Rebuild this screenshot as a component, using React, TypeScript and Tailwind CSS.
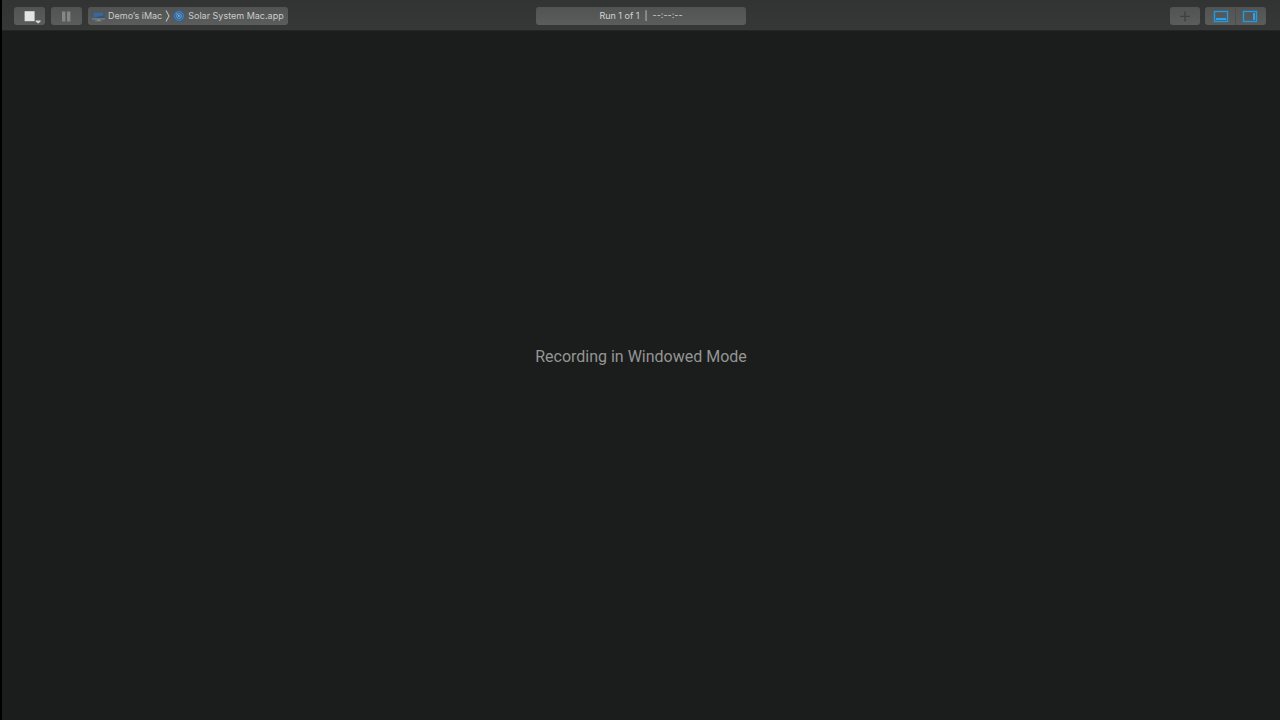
import React from 'react';

const buttonFace = 'bg-linear-to-b from-[#525453] to-[#5b5d5c]';

function StopIcon() {
  return (
    <svg width="31" height="18" viewBox="0 0 31 18" aria-hidden="true">
      <rect x="10.6" y="4.2" width="10" height="10" fill="#e2e3e2" />
      <path d="M21.6 13.4h5v1L24.1 16.6 21.6 14.4z" fill="#d4d5d4" />
    </svg>
  );
}

function PauseIcon() {
  return (
    <svg width="31" height="18" viewBox="0 0 31 18" aria-hidden="true">
      <path d="M11 4.4h3.4v10H11zM16 4.4h3.4v10H16z" fill="#858786" />
    </svg>
  );
}

function ComputerIcon() {
  return (
    <svg width="14" height="12" viewBox="0 0 14 12" aria-hidden="true">
      <rect x="0.4" y="2" width="12" height="7" rx="0.6" fill="#345577" />
      <path d="M1.4 2.6h10v2.8l-10 2z" fill="#3f678f" />
      <path d="M0 8.2h12.8v1.4H0z" fill="#777d82" />
      <path d="M5 9.6h3v.9h1.8v.8H3.2v-.8H5z" fill="#858988" />
    </svg>
  );
}

function TargetIcon() {
  return (
    <svg width="12" height="12" viewBox="0 0 12 12" aria-hidden="true">
      <circle cx="6" cy="6" r="5.9" fill="#2f6295" />
      <circle cx="6" cy="6" r="4.4" fill="none" stroke="#5c90bf" strokeWidth="0.7" />
      <circle cx="6" cy="6" r="2.4" fill="none" stroke="#78a3c8" strokeWidth="0.9" />
      <path d="M2.8 2.8L6 6" stroke="#83abcc" strokeWidth="0.7" />
      <circle cx="6" cy="6" r="0.9" fill="#8fb3d0" />
    </svg>
  );
}

function ChevronIcon() {
  return (
    <svg width="5" height="12" viewBox="0 0 5 12" aria-hidden="true">
      <path d="M1 0.4l3 5.6-3 5.6" fill="none" stroke="#bcbdbc" strokeWidth="1.1" />
    </svg>
  );
}

function PlusIcon() {
  return (
    <svg width="30" height="18" viewBox="0 0 30 18" aria-hidden="true">
      <path d="M15 4.4v10M10 9.4h10" stroke="#3f4140" strokeWidth="1.4" />
    </svg>
  );
}

function PaneFrame() {
  return (
    <>
      <rect x="1.5" y="1.5" width="13" height="10" fill="none" stroke="#2192d8" strokeOpacity="0.4" strokeWidth="2.2" />
      <rect x="1.5" y="1.5" width="13" height="10" fill="none" stroke="#2399e4" strokeWidth="1" />
    </>
  );
}

function BottomPaneIcon() {
  return (
    <svg width="16" height="13" viewBox="0 0 16 13" aria-hidden="true">
      <PaneFrame />
      <path d="M3 8h10v2H3z" fill="#2aa2ee" />
    </svg>
  );
}

function RightPaneIcon() {
  return (
    <svg width="16" height="13" viewBox="0 0 16 13" aria-hidden="true">
      <PaneFrame />
      <path d="M11 3h2v7h-2z" fill="#2aa2ee" />
    </svg>
  );
}

export default function App() {
  return (
    <div className="flex min-h-screen flex-col border-l-2 border-black bg-[#1b1d1c] font-['Inter','Liberation_Sans',sans-serif]">
      <header className="grid grid-cols-[1fr_auto_1fr] items-center border-b border-[#242625] bg-linear-to-b from-[#323433] to-[#363837] px-3 pt-[7px] pb-[5px]">
        <div className="flex items-center gap-1.5">
          <button aria-label="Stop recording" className={`h-[18px] w-[31px] rounded-[3px] ${buttonFace}`}>
            <StopIcon />
          </button>
          <button aria-label="Pause recording" className={`h-[18px] w-[31px] rounded-[3px] ${buttonFace}`}>
            <PauseIcon />
          </button>
          <div className={`flex h-[18px] items-center rounded-[3px] px-1 text-[9px] leading-[18px] text-[#cbcccb] ${buttonFace}`}>
            <button className="flex items-center gap-0.5 whitespace-nowrap">
              <ComputerIcon />
              Demo’s iMac
            </button>
            <span className="px-[3px]">
              <ChevronIcon />
            </span>
            <button className="flex items-center gap-[3px] whitespace-nowrap">
              <TargetIcon />
              Solar System Mac.app
            </button>
          </div>
        </div>
        <div
          role="status"
          className={`w-[210px] rounded-[3px] text-center text-[9px] leading-[18px] whitespace-pre text-[#d2d3d2] ${buttonFace}`}
        >
          {'Run 1 of 1  |  --:--:--'}
        </div>
        <div className="flex items-center justify-end gap-[5px] pr-0.5">
          <button aria-label="Add instrument" className={`h-[18px] w-[30px] rounded-[3px] ${buttonFace}`}>
            <PlusIcon />
          </button>
          <div className={`flex h-[18px] rounded-[3px] ${buttonFace}`}>
            <button aria-label="Toggle detail area" aria-pressed="true" className="flex items-center border-r border-[#4b4d4c] pr-1.5 pl-2">
              <BottomPaneIcon />
            </button>
            <button aria-label="Toggle inspector" aria-pressed="true" className="flex items-center pr-2 pl-1.5">
              <RightPaneIcon />
            </button>
          </div>
        </div>
      </header>
      <main className="flex flex-1 items-center justify-center pb-[38px]">
        <p className="font-['Roboto','Liberation_Sans',sans-serif] text-base leading-6 text-[#949594]">Recording in Windowed Mode</p>
      </main>
    </div>
  );
}
